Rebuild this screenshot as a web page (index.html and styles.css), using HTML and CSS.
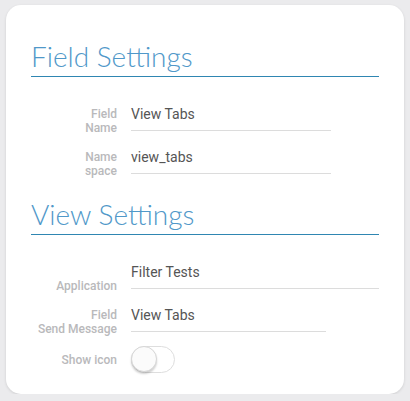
FILE: index.html
```html
<!DOCTYPE html>
<html>
<head>
<meta charset="utf-8">
<link rel="stylesheet" href="styles.css">
</head>
<body>
<div class="card">
  <h2 class="section-title">Field Settings</h2>
  <div class="rows">
    <div class="row">
      <div class="label">Field<br>Name</div>
      <div class="field w200">View Tabs</div>
    </div>
    <div class="row">
      <div class="label">Name<br>space</div>
      <div class="field w200">view_tabs</div>
    </div>
  </div>
  <h2 class="section-title second">View Settings</h2>
  <div class="rows">
    <div class="row">
      <div class="label low">Application</div>
      <div class="field wfull">Filter Tests</div>
    </div>
    <div class="row">
      <div class="label">Field<br>Send Message</div>
      <div class="field w195">View Tabs</div>
    </div>
    <div class="row toggle-row">
      <div class="label mid">Show icon</div>
      <div class="toggle"><span class="knob"></span></div>
    </div>
  </div>
</div>
</body>
</html>
```
FILE: styles.css
```css
html, body {
  margin: 0;
  padding: 0;
  background: #ebebed;
  font-family: Roboto, "Liberation Sans", sans-serif;
}
.card {
  margin: 5px 6px 0 6px;
  width: 398px;
  height: 389px;
  box-sizing: border-box;
  background: #fff;
  border-radius: 15px;
  box-shadow: 0 1px 3px rgba(0,0,0,0.12);
  padding: 35px 25px 0 25px;
}
.section-title {
  margin: 0;
  font-family: Lato, Roboto, sans-serif;
  font-size: 28px;
  line-height: 32px;
  font-weight: 300;
  color: #5098c9;
  padding-bottom: 4px;
  border-bottom: 1px solid #2f86b2;
}
.section-title.second {
  margin-top: 24px;
}
.rows {
  display: flex;
  flex-direction: column;
  gap: 17px;
  margin-top: 28px;
}
.row {
  display: grid;
  grid-template-columns: 86px auto;
  column-gap: 14px;
  align-items: start;
  height: 26px;
}
.label {
  text-align: right;
  font-size: 12px;
  line-height: 14px;
  font-weight: 500;
  color: #b9b9bb;
  padding-top: 2px;
  white-space: nowrap;
}
.label.low {
  padding-top: 16px;
}
.field {
  font-size: 14px;
  line-height: 18px;
  color: #555;
  padding-bottom: 7px;
  border-bottom: 1px solid #dcdcdc;
}
.w200 { width: 200px; }
.w195 { width: 195px; }
.wfull { width: 248px; }
.toggle-row {
  margin-top: -3px;
  align-items: center;
  height: 27px;
}
.label.mid {
  padding-top: 0;
}
.toggle {
  position: relative;
  width: 42px;
  height: 25px;
  border: 1px solid #dedede;
  border-radius: 14px;
  background: #fff;
}
.knob {
  position: absolute;
  left: -1px;
  top: -1px;
  width: 26px;
  height: 26px;
  border-radius: 50%;
  background: #fbfbfb;
  border: 1px solid #d6d6d6;
  box-sizing: border-box;
  box-shadow: 0 2px 2px rgba(0,0,0,0.18);
}
```
